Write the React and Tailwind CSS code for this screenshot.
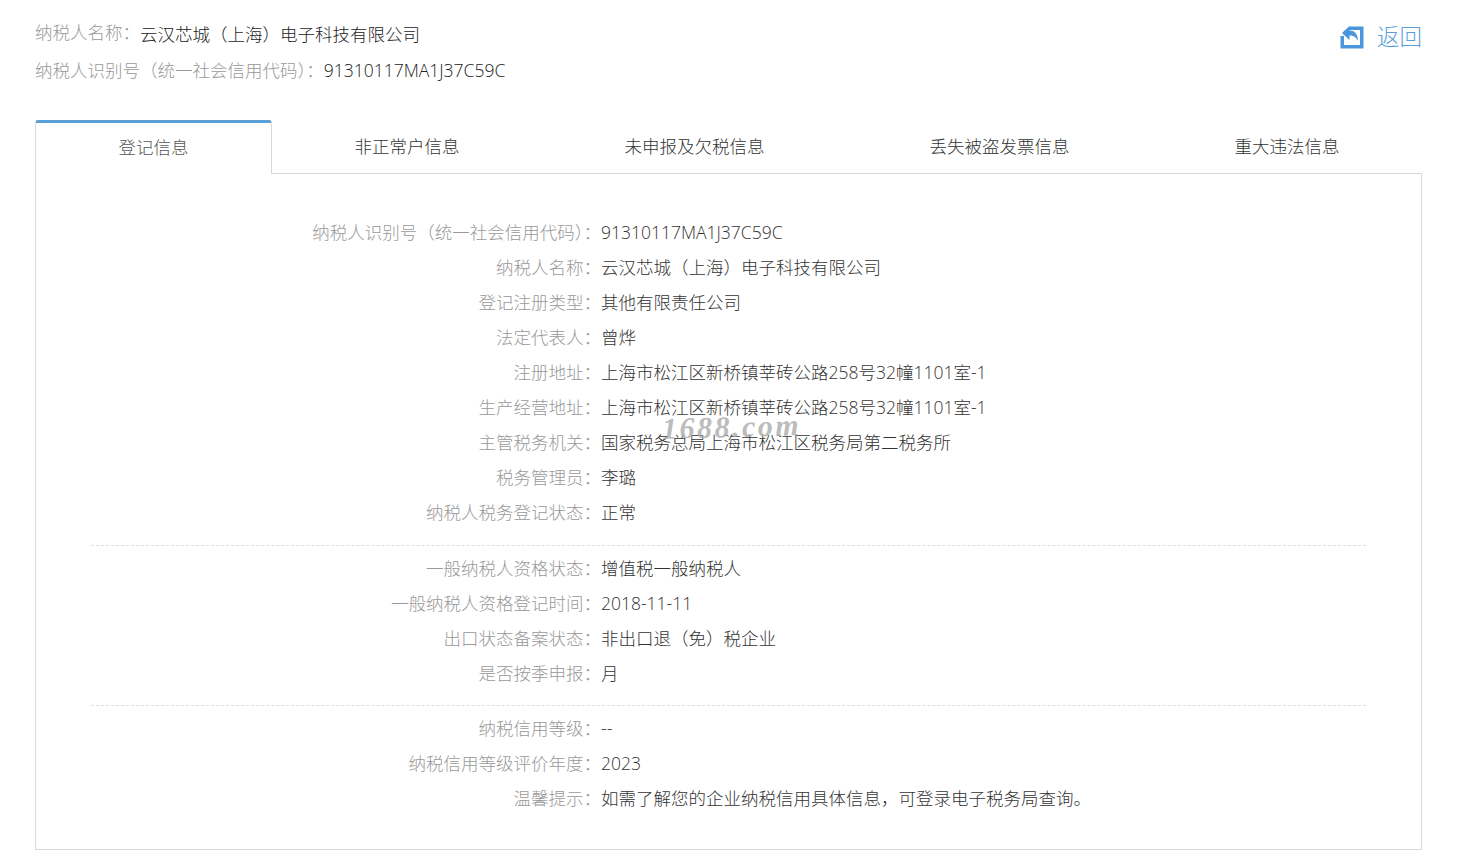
const groups = [
  [
    ["纳税人识别号（统一社会信用代码）：", "91310117MA1J37C59C"],
    ["纳税人名称：", "云汉芯城（上海）电子科技有限公司"],
    ["登记注册类型：", "其他有限责任公司"],
    ["法定代表人：", "曾烨"],
    ["注册地址：", "上海市松江区新桥镇莘砖公路258号32幢1101室-1"],
    ["生产经营地址：", "上海市松江区新桥镇莘砖公路258号32幢1101室-1"],
    ["主管税务机关：", "国家税务总局上海市松江区税务局第二税务所"],
    ["税务管理员：", "李璐"],
    ["纳税人税务登记状态：", "正常"],
  ],
  [
    ["一般纳税人资格状态：", "增值税一般纳税人"],
    ["一般纳税人资格登记时间：", "2018-11-11"],
    ["出口状态备案状态：", "非出口退（免）税企业"],
    ["是否按季申报：", "月"],
  ],
  [
    ["纳税信用等级：", "--"],
    ["纳税信用等级评价年度：", "2023"],
    ["温馨提示：", "如需了解您的企业纳税信用具体信息，可登录电子税务局查询。"],
  ],
];

const tabs = ["登记信息", "非正常户信息", "未申报及欠税信息", "丢失被盗发票信息", "重大违法信息"];

function Row({ label, value }) {
  return (
    <div className="flex h-[35px] items-center">
      <div className="w-[510px] shrink-0 text-right text-[#999999]">{label}</div>
      <div className="text-[#333333]">{value}</div>
    </div>
  );
}

export default function App() {
  return (
    <div className="relative h-[850px] w-[1458px] overflow-hidden bg-white pl-[35px] pr-[36px] pt-[16px] text-[17.5px] font-light font-['Open_Sans','Noto_Sans_CJK_SC',sans-serif]">
      <div className="flex items-start justify-between">
        <div>
          <div className="flex h-[36px] items-center">
            <span className="mb-[4px] text-[#999999]">纳税人名称：</span>
            <span className="text-[#222222]">云汉芯城（上海）电子科技有限公司</span>
          </div>
          <div className="flex h-[36px] items-center">
            <span className="text-[#999999]">纳税人识别号（统一社会信用代码）：</span>
            <span className="text-[#222222]">91310117MA1J37C59C</span>
          </div>
        </div>
        <div className="flex h-[36px] items-center pt-[6px]">
          <svg width="24" height="24" viewBox="0 0 24 24" className="mr-[13px]">
            <path d="M9 1.5H23.5V23.5H0.5V11H4V20H20V5H9Z" fill="#4a96dc" />
            <path d="M9.5 1V5.5C14 5.5 18 8.5 18 16C16 12 13.5 10.5 9.5 10.5V15L2 8Z" fill="#4a96dc" />
          </svg>
          <span className="text-[22.5px] text-[#5a9fdc]">返回</span>
        </div>
      </div>

      <div className="mt-[32px] flex h-[54px]">
        {tabs.map((t, i) =>
          i === 0 ? (
            <div key={t} className="flex flex-auto items-center justify-center rounded-t-[3px] border-x border-t-[3px] border-x-[#d9d9d9] border-t-[#5a9fd6] bg-white pb-[3px] text-[#555555]">
              {t}
            </div>
          ) : (
            <div key={t} className="flex flex-auto items-center justify-center border-b border-[#d9d9d9] text-[#333333]">
              {t}
            </div>
          ),
        )}
      </div>

      <div className="h-[676px] border-x border-b border-[#d9d9d9] px-[55px] pt-[41px]">
        {groups.map((g, i) => (
          <div key={i} className={i > 0 ? "border-t border-dashed border-[#dddddd] pt-[5px]" : ""}>
            <div className={i === 0 ? "pb-[15px]" : i === 1 ? "pb-[14px]" : ""}>
              {g.map(([l, v]) => (
                <Row key={l} label={l} value={v} />
              ))}
            </div>
          </div>
        ))}
      </div>

      <div className="absolute left-[662px] top-[404px] -rotate-[1.5deg] text-[30px] font-bold italic tracking-[2.5px] text-[#aaaaaa]/80 font-['Liberation_Serif',serif]">
        1688.com
      </div>
    </div>
  );
}
